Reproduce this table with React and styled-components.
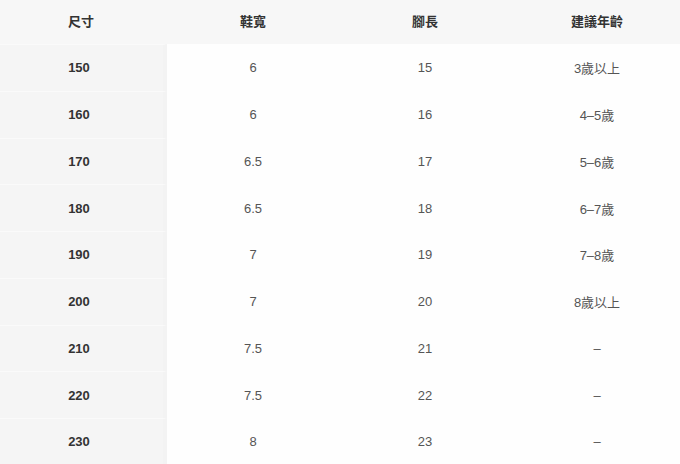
import React from 'react';
import styled, { createGlobalStyle } from 'styled-components';

const GlobalStyle = createGlobalStyle`
  html, body {
    margin: 0;
    padding: 0;
    background: #fff;
    overflow: hidden;
  }
  body {
    font-family: "Liberation Sans", "Noto Sans CJK TC", sans-serif;
  }
`;

const rows = [
  ['150', '6', '15', '3歲以上'],
  ['160', '6', '16', '4–5歲'],
  ['170', '6.5', '17', '5–6歲'],
  ['180', '6.5', '18', '6–7歲'],
  ['190', '7', '19', '7–8歲'],
  ['200', '7', '20', '8歲以上'],
  ['210', '7.5', '21', '–'],
  ['220', '7.5', '22', '–'],
  ['230', '8', '23', '–'],
];

const headers = ['尺寸', '鞋寬', '腳長', '建議年齡'];

const SizeTable = () => {
  return (
    <Wrapper>
      <HeadRow>
        {headers.map((h) => (
          <HeadCell key={h}>{h}</HeadCell>
        ))}
      </HeadRow>
      {rows.map((row) => (
        <Row key={row[0]}>
          {row.map((value, i) => (
            <Cell key={i} $first={i === 0}>
              {value}
            </Cell>
          ))}
        </Row>
      ))}
    </Wrapper>
  );
};

export default function App() {
  return (
    <>
      <GlobalStyle />
      <SizeTable />
    </>
  );
}

const Wrapper = styled.div`
  width: 688px;
  margin-left: -5px;
  display: flex;
  flex-direction: column;
  font-size: 13px;
`;

const HeadRow = styled.div`
  display: grid;
  grid-template-columns: repeat(4, 172px);
  height: 44px;
  background: #f7f7f7;
`;

const HeadCell = styled.div`
  display: flex;
  align-items: center;
  justify-content: center;
  padding-bottom: 4px;
  font-weight: 700;
  color: #333;
`;

const Row = styled.div`
  display: grid;
  grid-template-columns: repeat(4, 172px);
  height: 46.75px;
`;

const Cell = styled.div`
  display: flex;
  align-items: center;
  justify-content: center;
  color: ${(p) => (p.$first ? '#333' : '#555')};
  font-weight: ${(p) => (p.$first ? 600 : 400)};
  background: ${(p) => (p.$first ? '#f5f5f5' : '#fefefe')};
  border-top: 1px solid ${(p) => (p.$first ? '#fafafa' : '#fefefe')};
  border-right: ${(p) => (p.$first ? '4px solid #f3f3f3' : 'none')};
`;
